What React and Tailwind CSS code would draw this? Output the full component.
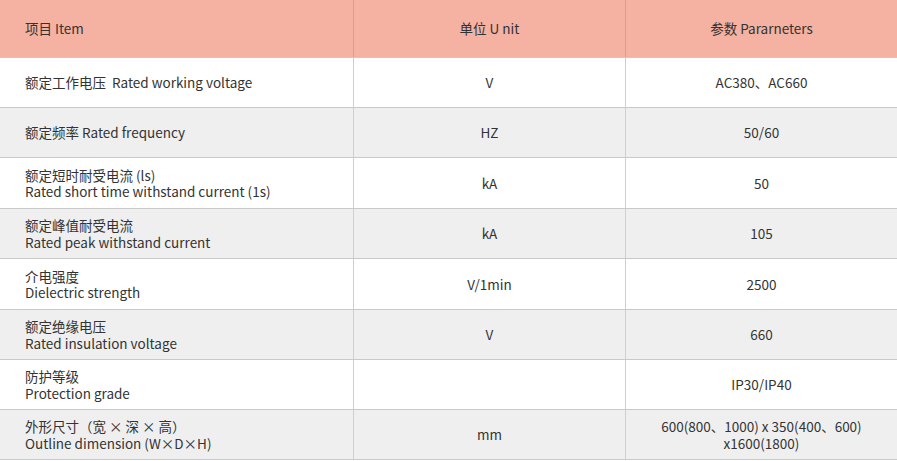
import React from "react";

const rows = [
  { item: ["额定工作电压  Rated working voltage"], unit: "V", param: ["AC380、AC660"], h: "h-[50px]" },
  { item: ["额定频率 Rated frequency"], unit: "HZ", param: ["50/60"], h: "h-[50px]" },
  { item: ["额定短时耐受电流 (ls)", "Rated short time withstand current (1s)"], unit: "kA", param: ["50"], h: "h-[51px]" },
  { item: ["额定峰值耐受电流", "Rated peak withstand current"], unit: "kA", param: ["105"], h: "h-[50px]" },
  { item: ["介电强度", "Dielectric strength"], unit: "V/1min", param: ["2500"], h: "h-[51px]" },
  { item: ["额定绝缘电压", "Rated insulation voltage"], unit: "V", param: ["660"], h: "h-[50px]" },
  { item: ["防护等级", "Protection grade"], unit: "", param: ["IP30/IP40"], h: "h-[50px]" },
  { item: ["外形尺寸（宽 × 深 × 高）", "Outline dimension (W×D×H)"], unit: "mm", param: ["600(800、1000) x 350(400、600)", "x1600(1800)"], h: "h-[50px]" },
];

export default function App() {
  return (
    <div
      className="w-[897px] h-[461px] bg-white text-[#333333] text-[13.5px] leading-[16.5px]"
      style={{ fontFamily: '"Noto Sans CJK SC", "Noto Sans", sans-serif' }}
    >
      <div className="grid grid-cols-[354px_272px_1fr] h-[58px] bg-[#f5b1a2] border-b border-[#c9c9c9]">
        <div className="flex items-center pl-[25px] border-r border-[#c9a49a]">项目 Item</div>
        <div className="flex items-center justify-center border-r border-[#c9a49a]">单位 U nit</div>
        <div className="flex items-center justify-center">参数 Pararneters</div>
      </div>
      {rows.map((r, i) => (
        <div
          key={i}
          className={
            "grid grid-cols-[354px_272px_1fr] border-b border-[#c9c9c9] " +
            r.h +
            " " +
            (i % 2 === 1 ? "bg-[#efefef]" : "bg-white")
          }
        >
          <div className="flex flex-col justify-center pl-[25px] border-r border-[#cfcfcf] whitespace-pre">
            {r.item.map((t, j) => (
              <div key={j}>{t}</div>
            ))}
          </div>
          <div className="flex items-center justify-center border-r border-[#cfcfcf]">{r.unit}</div>
          <div className="flex flex-col items-center justify-center text-center">
            {r.param.map((t, j) => (
              <div key={j}>{t}</div>
            ))}
          </div>
        </div>
      ))}
    </div>
  );
}
